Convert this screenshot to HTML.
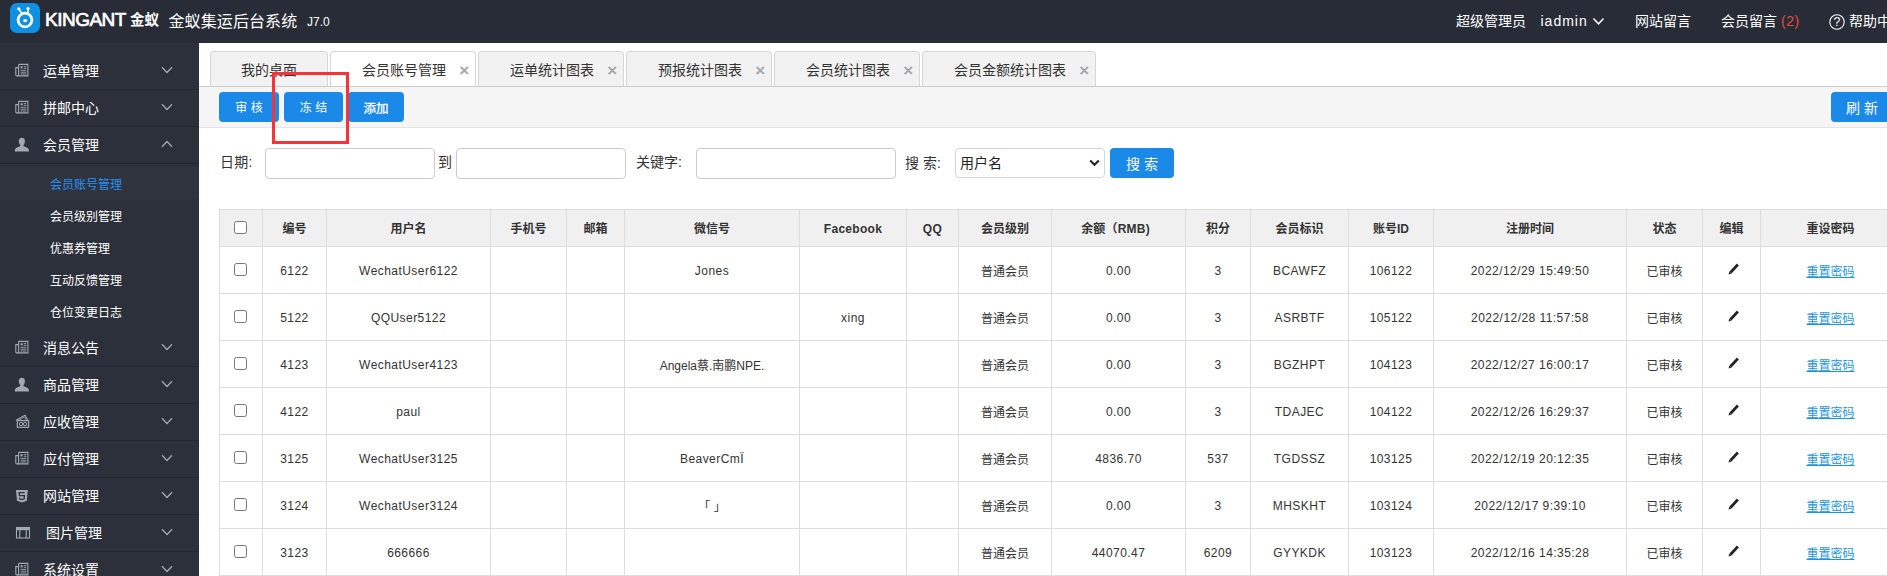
<!DOCTYPE html>
<html lang="zh-CN">
<head>
<meta charset="utf-8">
<title>金蚁集运后台系统</title>
<style>
*{box-sizing:border-box;margin:0;padding:0}
html,body{width:1887px;height:576px;overflow:hidden;background:#fff}
body{position:relative;font-family:"Liberation Sans","Noto Sans CJK SC",sans-serif;font-size:14px;color:#333}
a{text-decoration:none;color:inherit}
.abs{position:absolute}
/* header */
#hd{position:absolute;left:0;top:0;width:1887px;height:43px;background:#272c36;color:#fff}
#hd .logo{position:absolute;left:10px;top:3px;width:30px;height:30px}
#hd .brand{position:absolute;left:45px;top:8.5px;height:22px;line-height:22px;font-size:19px;font-weight:normal;-webkit-text-stroke:.7px #fff;letter-spacing:-.5px;white-space:nowrap}
#hd .brand2{position:absolute;left:130px;top:9px;height:22px;line-height:22px;font-size:14.5px;font-weight:bold;white-space:nowrap}
#hd .title{position:absolute;left:168.5px;letter-spacing:.1px;top:10px;height:24px;line-height:24px;font-size:16px;white-space:nowrap}
#hd .ver{position:absolute;left:307px;top:12px;height:20px;line-height:20px;font-size:12px;white-space:nowrap}
#hd .nv{position:absolute;top:10px;height:22px;line-height:22px;font-size:14px;white-space:nowrap}
/* aside */
#as{position:absolute;left:0;top:43px;width:199px;height:533px;background:#2b303b;color:#fff}
#as .it{position:absolute;left:0;width:199px;height:37px;border-bottom:1px solid #22262e;font-size:14px}
#as .it .tx{position:absolute;left:43px;top:7px;height:22px;line-height:22px;white-space:nowrap}
#as .it svg.ic{position:absolute;left:14px;top:10px;width:17px;height:16px}
#as .it svg.cv{position:absolute;left:161px;top:13px;width:12px;height:8px}
#as .sub{position:absolute;left:0;width:199px;height:32px;font-size:12px;line-height:36px;padding-left:50px;overflow:hidden;white-space:nowrap}
#as .sub.on{background:#2f343f;color:#2a8ff0}
/* main */
#tabs{position:absolute;left:199px;top:43px;width:1688px;height:44px;background:#fff;border-bottom:1px solid #ccc}
.tab{position:absolute;top:8px;height:35px;border:1px solid #d6d6d6;border-bottom:none;border-radius:4px 4px 0 0;background:#f2f2f2;font-size:14px;line-height:34px;color:#333;white-space:nowrap}
.tab.on{background:#fff}
.tab span{position:absolute;top:1px}
.tab i{position:absolute;top:2px;margin-left:-.7px;font-style:normal;font-weight:bold;color:#a3a8ae;font-size:17px}
#tb{position:absolute;left:199px;top:87px;width:1688px;height:41px;background:#f5f5f5;border-bottom:1px solid #e5e5e5}
.btn{position:absolute;height:30px;border-radius:4px;background:#1b89e8;color:#fff;font-size:12px;line-height:32px;text-align:center;white-space:nowrap}
.inp{position:absolute;top:148px;height:31px;border:1px solid #ccc;border-radius:4px;background:#fff}
.lb{position:absolute;top:151px;height:22px;line-height:22px;font-size:14px;white-space:nowrap;color:#333}
#red{position:absolute;left:272px;top:72px;width:77px;height:72px;border:3px solid #f63338}
/* table */
#tw{position:absolute;left:219px;top:209px;width:1690px}
table{border-collapse:collapse;table-layout:fixed;width:1681px;font-size:12px;color:#333}
th,td{border:1px solid #ddd;text-align:center;vertical-align:middle;white-space:nowrap;overflow:hidden;padding:0}
th{height:37px;background:#f0f0f0;font-weight:bold;color:#333;padding-bottom:1px}
td{height:47px}
td.l{padding-top:2px;letter-spacing:.45px}
th.l{padding-top:3px;letter-spacing:.3px}
th.c,td.c{line-height:0}
svg.pc{display:block;margin:0 auto;position:relative;left:2.5px;top:-1.5px}
td a.rs{color:#1c95dd;text-decoration:underline;text-underline-offset:1px;text-decoration-thickness:1px}
.cb{display:block;width:13px;height:13px;border:1px solid #767676;border-radius:2.5px;background:#fff;margin:0 auto;position:relative;top:-.5px;left:-.5px}
</style>
</head>
<body>
<div id="hd">
  <svg class="logo" viewBox="0 0 30 30"><rect width="30" height="30" rx="7" fill="#0e90e4"/><circle cx="15" cy="17" r="6.9" fill="none" stroke="#fff" stroke-width="2.8"/><ellipse cx="15.2" cy="17.6" rx="2.1" ry="1.6" fill="#fff"/><path d="M12.2 11 L9 6 M17.8 11 L18.2 6" stroke="#fff" stroke-width="1.5" fill="none" stroke-linecap="round"/><circle cx="8.8" cy="5.8" r="1.6" fill="#fff"/><circle cx="18" cy="5.6" r="1.6" fill="#fff"/></svg>
  <div class="brand">KINGANT</div>
  <div class="brand2">金蚁</div>
  <div class="title">金蚁集运后台系统</div>
  <div class="ver">J7.0</div>
  <div class="nv" style="left:1456px">超级管理员</div>
  <div class="nv" style="left:1540.5px;letter-spacing:1px">iadmin</div>
  <svg class="abs" style="left:1592px;top:17px;width:13px;height:9px" viewBox="0 0 13 9"><path d="M1.5 1.5 L6.5 6.8 L11.5 1.5" stroke="#fff" stroke-width="1.5" fill="none"/></svg>
  <div class="nv" style="left:1635px">网站留言</div>
  <div class="nv" style="left:1721px">会员留言 <span style="color:#e74a3f;letter-spacing:.6px">(2)</span></div>
  <svg class="abs" style="left:1829px;top:14px;width:16px;height:16px" viewBox="0 0 16 16"><circle cx="8" cy="8" r="7.2" fill="none" stroke="#fff" stroke-width="1.1"/><text x="8" y="12.300" font-size="12.500" font-family="Liberation Sans, sans-serif" fill="#fff" text-anchor="middle">?</text></svg>
  <div class="nv" style="left:1849px">帮助中心</div>
</div>

<div id="as">
<div class="it" style="top:10px"><svg class="ic" viewBox="0 0 17 16"><path d="M4.600 1.400h9.300v11.500H2.600a.8.8 0 0 1-.8-.8V4.600h2.800" fill="none" stroke="#a3a9b4" stroke-width="1.100"/><path d="M4.600 1.400v10.700a.8.800 0 0 1-.8.800" fill="none" stroke="#a3a9b4" stroke-width="1.100"/><rect x="6.500" y="3.200" width="2.200" height="2.200" fill="#a3a9b4"/><path d="M9.800 3.600h2.500M9.800 5.300h2.500M6.500 7.300h5.800M6.500 9.200h5.800M6.500 11h5.800" stroke="#a3a9b4" stroke-width=".9"/></svg><span class="tx" style="left:43px">运单管理</span><svg class="cv" viewBox="0 0 12 8"><path d="M1 1.300 L6 6.500 L11 1.300" stroke="#a3a9b4" stroke-width="1.300" fill="none"/></svg></div>
<div class="it" style="top:47px"><svg class="ic" viewBox="0 0 17 16"><path d="M4.600 1.400h9.300v11.500H2.600a.8.8 0 0 1-.8-.8V4.600h2.800" fill="none" stroke="#a3a9b4" stroke-width="1.100"/><path d="M4.600 1.400v10.700a.8.800 0 0 1-.8.800" fill="none" stroke="#a3a9b4" stroke-width="1.100"/><rect x="6.500" y="3.200" width="2.200" height="2.200" fill="#a3a9b4"/><path d="M9.800 3.600h2.500M9.800 5.300h2.500M6.500 7.300h5.800M6.500 9.200h5.800M6.500 11h5.800" stroke="#a3a9b4" stroke-width=".9"/></svg><span class="tx" style="left:43px">拼邮中心</span><svg class="cv" viewBox="0 0 12 8"><path d="M1 1.300 L6 6.500 L11 1.300" stroke="#a3a9b4" stroke-width="1.300" fill="none"/></svg></div>
<div class="it" style="top:84px"><svg class="ic" viewBox="0 0 17 16"><path d="M7.900.700C9.900.700 10.900 2.200 10.900 4.200 10.900 5.900 10.200 7.200 9.500 8L9.500 9.200C11.400 10 14.300 10.800 14.900 12.400L14.900 14.500.8 14.500.8 12.400C1.400 10.800 4.300 10 6.200 9.200L6.200 8C5.500 7.200 4.800 5.900 4.800 4.200 4.800 2.200 5.900.700 7.900.700Z" fill="#a3a9b4"/></svg><span class="tx" style="left:43px">会员管理</span><svg class="cv" viewBox="0 0 12 8"><path d="M1 6.700 L6 1.500 L11 6.700" stroke="#a3a9b4" stroke-width="1.300" fill="none"/></svg></div>
<div class="it" style="top:287px"><svg class="ic" viewBox="0 0 17 16"><path d="M4.600 1.400h9.300v11.500H2.600a.8.8 0 0 1-.8-.8V4.600h2.800" fill="none" stroke="#a3a9b4" stroke-width="1.100"/><path d="M4.600 1.400v10.700a.8.800 0 0 1-.8.800" fill="none" stroke="#a3a9b4" stroke-width="1.100"/><rect x="6.500" y="3.200" width="2.200" height="2.200" fill="#a3a9b4"/><path d="M9.800 3.600h2.500M9.800 5.300h2.500M6.500 7.300h5.800M6.500 9.200h5.800M6.500 11h5.800" stroke="#a3a9b4" stroke-width=".9"/></svg><span class="tx" style="left:43px">消息公告</span><svg class="cv" viewBox="0 0 12 8"><path d="M1 1.300 L6 6.500 L11 1.300" stroke="#a3a9b4" stroke-width="1.300" fill="none"/></svg></div>
<div class="it" style="top:324px"><svg class="ic" viewBox="0 0 17 16"><path d="M7.900.700C9.900.700 10.900 2.200 10.900 4.200 10.900 5.900 10.200 7.200 9.500 8L9.500 9.200C11.400 10 14.300 10.800 14.900 12.400L14.900 14.500.8 14.500.8 12.400C1.400 10.800 4.300 10 6.200 9.200L6.200 8C5.500 7.200 4.800 5.900 4.800 4.200 4.800 2.200 5.900.700 7.900.700Z" fill="#a3a9b4"/></svg><span class="tx" style="left:43px">商品管理</span><svg class="cv" viewBox="0 0 12 8"><path d="M1 1.300 L6 6.500 L11 1.300" stroke="#a3a9b4" stroke-width="1.300" fill="none"/></svg></div>
<div class="it" style="top:361px"><svg class="ic" viewBox="0 0 17 16"><path d="M2 6.300 L11 1.300 L13.600 6" fill="none" stroke="#a3a9b4" stroke-width="1.100"/><path d="M4.500 6.300 L10.600 3 L12.200 6.200" fill="none" stroke="#a3a9b4" stroke-width=".8"/><rect x="3.300" y="6.600" width="11.300" height="6.700" fill="none" stroke="#a3a9b4" stroke-width="1.200"/><circle cx="7" cy="10" r="1.700" fill="none" stroke="#a3a9b4" stroke-width="1"/><circle cx="11" cy="10" r="1.700" fill="none" stroke="#a3a9b4" stroke-width="1"/></svg><span class="tx" style="left:43px">应收管理</span><svg class="cv" viewBox="0 0 12 8"><path d="M1 1.300 L6 6.500 L11 1.300" stroke="#a3a9b4" stroke-width="1.300" fill="none"/></svg></div>
<div class="it" style="top:398px"><svg class="ic" viewBox="0 0 17 16"><path d="M4.600 1.400h9.300v11.500H2.600a.8.8 0 0 1-.8-.8V4.600h2.800" fill="none" stroke="#a3a9b4" stroke-width="1.100"/><path d="M4.600 1.400v10.700a.8.800 0 0 1-.8.800" fill="none" stroke="#a3a9b4" stroke-width="1.100"/><rect x="6.500" y="3.200" width="2.200" height="2.200" fill="#a3a9b4"/><path d="M9.800 3.600h2.500M9.800 5.300h2.500M6.500 7.300h5.800M6.500 9.200h5.800M6.500 11h5.800" stroke="#a3a9b4" stroke-width=".9"/></svg><span class="tx" style="left:43px">应付管理</span><svg class="cv" viewBox="0 0 12 8"><path d="M1 1.300 L6 6.500 L11 1.300" stroke="#a3a9b4" stroke-width="1.300" fill="none"/></svg></div>
<div class="it" style="top:435px"><svg class="ic" viewBox="0 0 17 16"><path d="M2 2h11.800l-1 10.700L7.900 14.400 3 12.700z" fill="#a3a9b4"/><path d="M10.700 4.600H5.200l.25 3h5l-.3 3.200-2.250.7-2.250-.7-.1-1.100" fill="none" stroke="#2b303b" stroke-width="1.300"/></svg><span class="tx" style="left:43px">网站管理</span><svg class="cv" viewBox="0 0 12 8"><path d="M1 1.300 L6 6.500 L11 1.300" stroke="#a3a9b4" stroke-width="1.300" fill="none"/></svg></div>
<div class="it" style="top:472px"><svg class="ic" viewBox="0 0 17 16"><rect x="2.500" y="2.500" width="13" height="10.500" fill="none" stroke="#a3a9b4" stroke-width="1.100"/><rect x="2" y="2" width="14" height="3.200" fill="#a3a9b4"/><path d="M5.800 5v8M12.200 5v8" stroke="#a3a9b4" stroke-width="1.100"/></svg><span class="tx" style="left:46px">图片管理</span><svg class="cv" viewBox="0 0 12 8"><path d="M1 1.300 L6 6.500 L11 1.300" stroke="#a3a9b4" stroke-width="1.300" fill="none"/></svg></div>
<div class="it" style="top:509px"><svg class="ic" viewBox="0 0 17 16"><path d="M4.600 1.400h9.300v11.500H2.600a.8.8 0 0 1-.8-.8V4.600h2.800" fill="none" stroke="#a3a9b4" stroke-width="1.100"/><path d="M4.600 1.400v10.700a.8.800 0 0 1-.8.800" fill="none" stroke="#a3a9b4" stroke-width="1.100"/><rect x="6.500" y="3.200" width="2.200" height="2.200" fill="#a3a9b4"/><path d="M9.800 3.600h2.500M9.800 5.300h2.500M6.500 7.300h5.800M6.500 9.200h5.800M6.500 11h5.800" stroke="#a3a9b4" stroke-width=".9"/></svg><span class="tx" style="left:43px">系统设置</span><svg class="cv" viewBox="0 0 12 8"><path d="M1 1.300 L6 6.500 L11 1.300" stroke="#a3a9b4" stroke-width="1.300" fill="none"/></svg></div>
<a class="sub on" style="top:124px">会员账号管理</a>
<a class="sub" style="top:156px">会员级别管理</a>
<a class="sub" style="top:188px">优惠券管理</a>
<a class="sub" style="top:220px">互动反馈管理</a>
<a class="sub" style="top:252px">仓位变更日志</a>
</div>

<div id="tabs">
<div class="tab" style="left:11px;width:118px"><span style="left:30px">我的桌面</span></div>
<div class="tab on" style="left:131px;width:146px"><span style="left:31px">会员账号管理</span><i style="left:129px">×</i></div>
<div class="tab" style="left:279px;width:146px"><span style="left:31px">运单统计图表</span><i style="left:129px">×</i></div>
<div class="tab" style="left:427px;width:146px"><span style="left:31px">预报统计图表</span><i style="left:129px">×</i></div>
<div class="tab" style="left:575px;width:146px"><span style="left:31px">会员统计图表</span><i style="left:129px">×</i></div>
<div class="tab" style="left:723px;width:174px"><span style="left:31px">会员金额统计图表</span><i style="left:157px">×</i></div>
</div>
<div id="tb">
<a class="btn" style="left:20px;top:5px;width:60px;line-height:33px">审 核</a>
<a class="btn" style="left:85px;top:5px;width:59px;line-height:33px">冻 结</a>
<a class="btn" style="left:149px;top:5px;width:56px;font-size:12.5px;line-height:34px;-webkit-text-stroke:.3px #fff">添加</a>
<a class="btn" style="left:1632px;top:5px;width:62px;font-size:14px">刷 新</a>
</div>

<div id="search">
<span class="lb" style="left:220px;letter-spacing:.3px">日期:</span>
<div class="inp" style="left:265px;width:170px"></div>
<span class="lb" style="left:438px">到</span>
<div class="inp" style="left:456px;width:170px"></div>
<span class="lb" style="left:636px">关键字:</span>
<div class="inp" style="left:696px;width:200px"></div>
<span class="lb" style="left:905px;top:152px">搜 索:</span>
<div class="inp" style="left:955px;width:150px;height:30px;border-color:#d4d4d4"><span style="position:absolute;left:4px;top:3px;line-height:22px;font-size:14px;color:#222">用户名</span><svg style="position:absolute;right:4px;top:10px;width:11px;height:8px" viewBox="0 0 11 8"><path d="M1.2 1.500 L5.500 5.800 L9.800 1.500" stroke="#222" stroke-width="2" fill="none"/></svg></div>
<a class="btn" style="left:1110px;top:148px;width:64px;font-size:14px">搜 索</a>
</div>

<div id="tw">
<table><colgroup><col style="width:43px"><col style="width:64px"><col style="width:164px"><col style="width:76px"><col style="width:58px"><col style="width:175px"><col style="width:107px"><col style="width:52px"><col style="width:93px"><col style="width:134px"><col style="width:65px"><col style="width:98px"><col style="width:85px"><col style="width:193px"><col style="width:76px"><col style="width:58px"><col style="width:140px"></colgroup>
<thead><tr><th class="c"><span class="cb"></span></th><th>编号</th><th>用户名</th><th>手机号</th><th>邮箱</th><th>微信号</th><th class="l">Facebook</th><th class="l">QQ</th><th>会员级别</th><th style="padding-right:6px;letter-spacing:.2px">余额（RMB)</th><th>积分</th><th>会员标识</th><th>账号ID</th><th>注册时间</th><th>状态</th><th>编辑</th><th>重设密码</th></tr></thead><tbody>
<tr><td class="c"><span class="cb"></span></td><td class="l">6122</td><td class="l">WechatUser6122</td><td></td><td></td><td class="l">Jones</td><td></td><td></td><td>普通会员</td><td class="l">0.00</td><td class="l">3</td><td class="l">BCAWFZ</td><td class="l">106122</td><td class="l">2022/12/29 15:49:50</td><td>已审核</td><td class="c"><svg class="pc" viewBox="0 0 12 12" width="12" height="12"><path d="M.5 11.600 L1.400 8.500 L3.600 10.600 Z" fill="#222"/><path d="M2.500 9.500 L9.900 1.500" stroke="#222" stroke-width="2.700" fill="none"/></svg></td><td><a class="rs">重置密码</a></td></tr>
<tr><td class="c"><span class="cb"></span></td><td class="l">5122</td><td class="l">QQUser5122</td><td></td><td></td><td></td><td class="l">xing</td><td></td><td>普通会员</td><td class="l">0.00</td><td class="l">3</td><td class="l">ASRBTF</td><td class="l">105122</td><td class="l">2022/12/28 11:57:58</td><td>已审核</td><td class="c"><svg class="pc" viewBox="0 0 12 12" width="12" height="12"><path d="M.5 11.600 L1.400 8.500 L3.600 10.600 Z" fill="#222"/><path d="M2.500 9.500 L9.900 1.500" stroke="#222" stroke-width="2.700" fill="none"/></svg></td><td><a class="rs">重置密码</a></td></tr>
<tr><td class="c"><span class="cb"></span></td><td class="l">4123</td><td class="l">WechatUser4123</td><td></td><td></td><td>Angela蔡.南鹏NPE.</td><td></td><td></td><td>普通会员</td><td class="l">0.00</td><td class="l">3</td><td class="l">BGZHPT</td><td class="l">104123</td><td class="l">2022/12/27 16:00:17</td><td>已审核</td><td class="c"><svg class="pc" viewBox="0 0 12 12" width="12" height="12"><path d="M.5 11.600 L1.400 8.500 L3.600 10.600 Z" fill="#222"/><path d="M2.500 9.500 L9.900 1.500" stroke="#222" stroke-width="2.700" fill="none"/></svg></td><td><a class="rs">重置密码</a></td></tr>
<tr><td class="c"><span class="cb"></span></td><td class="l">4122</td><td class="l">paul</td><td></td><td></td><td></td><td></td><td></td><td>普通会员</td><td class="l">0.00</td><td class="l">3</td><td class="l">TDAJEC</td><td class="l">104122</td><td class="l">2022/12/26 16:29:37</td><td>已审核</td><td class="c"><svg class="pc" viewBox="0 0 12 12" width="12" height="12"><path d="M.5 11.600 L1.400 8.500 L3.600 10.600 Z" fill="#222"/><path d="M2.500 9.500 L9.900 1.500" stroke="#222" stroke-width="2.700" fill="none"/></svg></td><td><a class="rs">重置密码</a></td></tr>
<tr><td class="c"><span class="cb"></span></td><td class="l">3125</td><td class="l">WechatUser3125</td><td></td><td></td><td class="l">BeaverCmÏ</td><td></td><td></td><td>普通会员</td><td class="l">4836.70</td><td class="l">537</td><td class="l">TGDSSZ</td><td class="l">103125</td><td class="l">2022/12/19 20:12:35</td><td>已审核</td><td class="c"><svg class="pc" viewBox="0 0 12 12" width="12" height="12"><path d="M.5 11.600 L1.400 8.500 L3.600 10.600 Z" fill="#222"/><path d="M2.500 9.500 L9.900 1.500" stroke="#222" stroke-width="2.700" fill="none"/></svg></td><td><a class="rs">重置密码</a></td></tr>
<tr><td class="c"><span class="cb"></span></td><td class="l">3124</td><td class="l">WechatUser3124</td><td></td><td></td><td>「 」</td><td></td><td></td><td>普通会员</td><td class="l">0.00</td><td class="l">3</td><td class="l">MHSKHT</td><td class="l">103124</td><td class="l">2022/12/17 9:39:10</td><td>已审核</td><td class="c"><svg class="pc" viewBox="0 0 12 12" width="12" height="12"><path d="M.5 11.600 L1.400 8.500 L3.600 10.600 Z" fill="#222"/><path d="M2.500 9.500 L9.900 1.500" stroke="#222" stroke-width="2.700" fill="none"/></svg></td><td><a class="rs">重置密码</a></td></tr>
<tr><td class="c"><span class="cb"></span></td><td class="l">3123</td><td class="l">666666</td><td></td><td></td><td></td><td></td><td></td><td>普通会员</td><td class="l">44070.47</td><td class="l">6209</td><td class="l">GYYKDK</td><td class="l">103123</td><td class="l">2022/12/16 14:35:28</td><td>已审核</td><td class="c"><svg class="pc" viewBox="0 0 12 12" width="12" height="12"><path d="M.5 11.600 L1.400 8.500 L3.600 10.600 Z" fill="#222"/><path d="M2.500 9.500 L9.900 1.500" stroke="#222" stroke-width="2.700" fill="none"/></svg></td><td><a class="rs">重置密码</a></td></tr>
</tbody></table>
</div>
<div id="red"></div>
</body>
</html>
